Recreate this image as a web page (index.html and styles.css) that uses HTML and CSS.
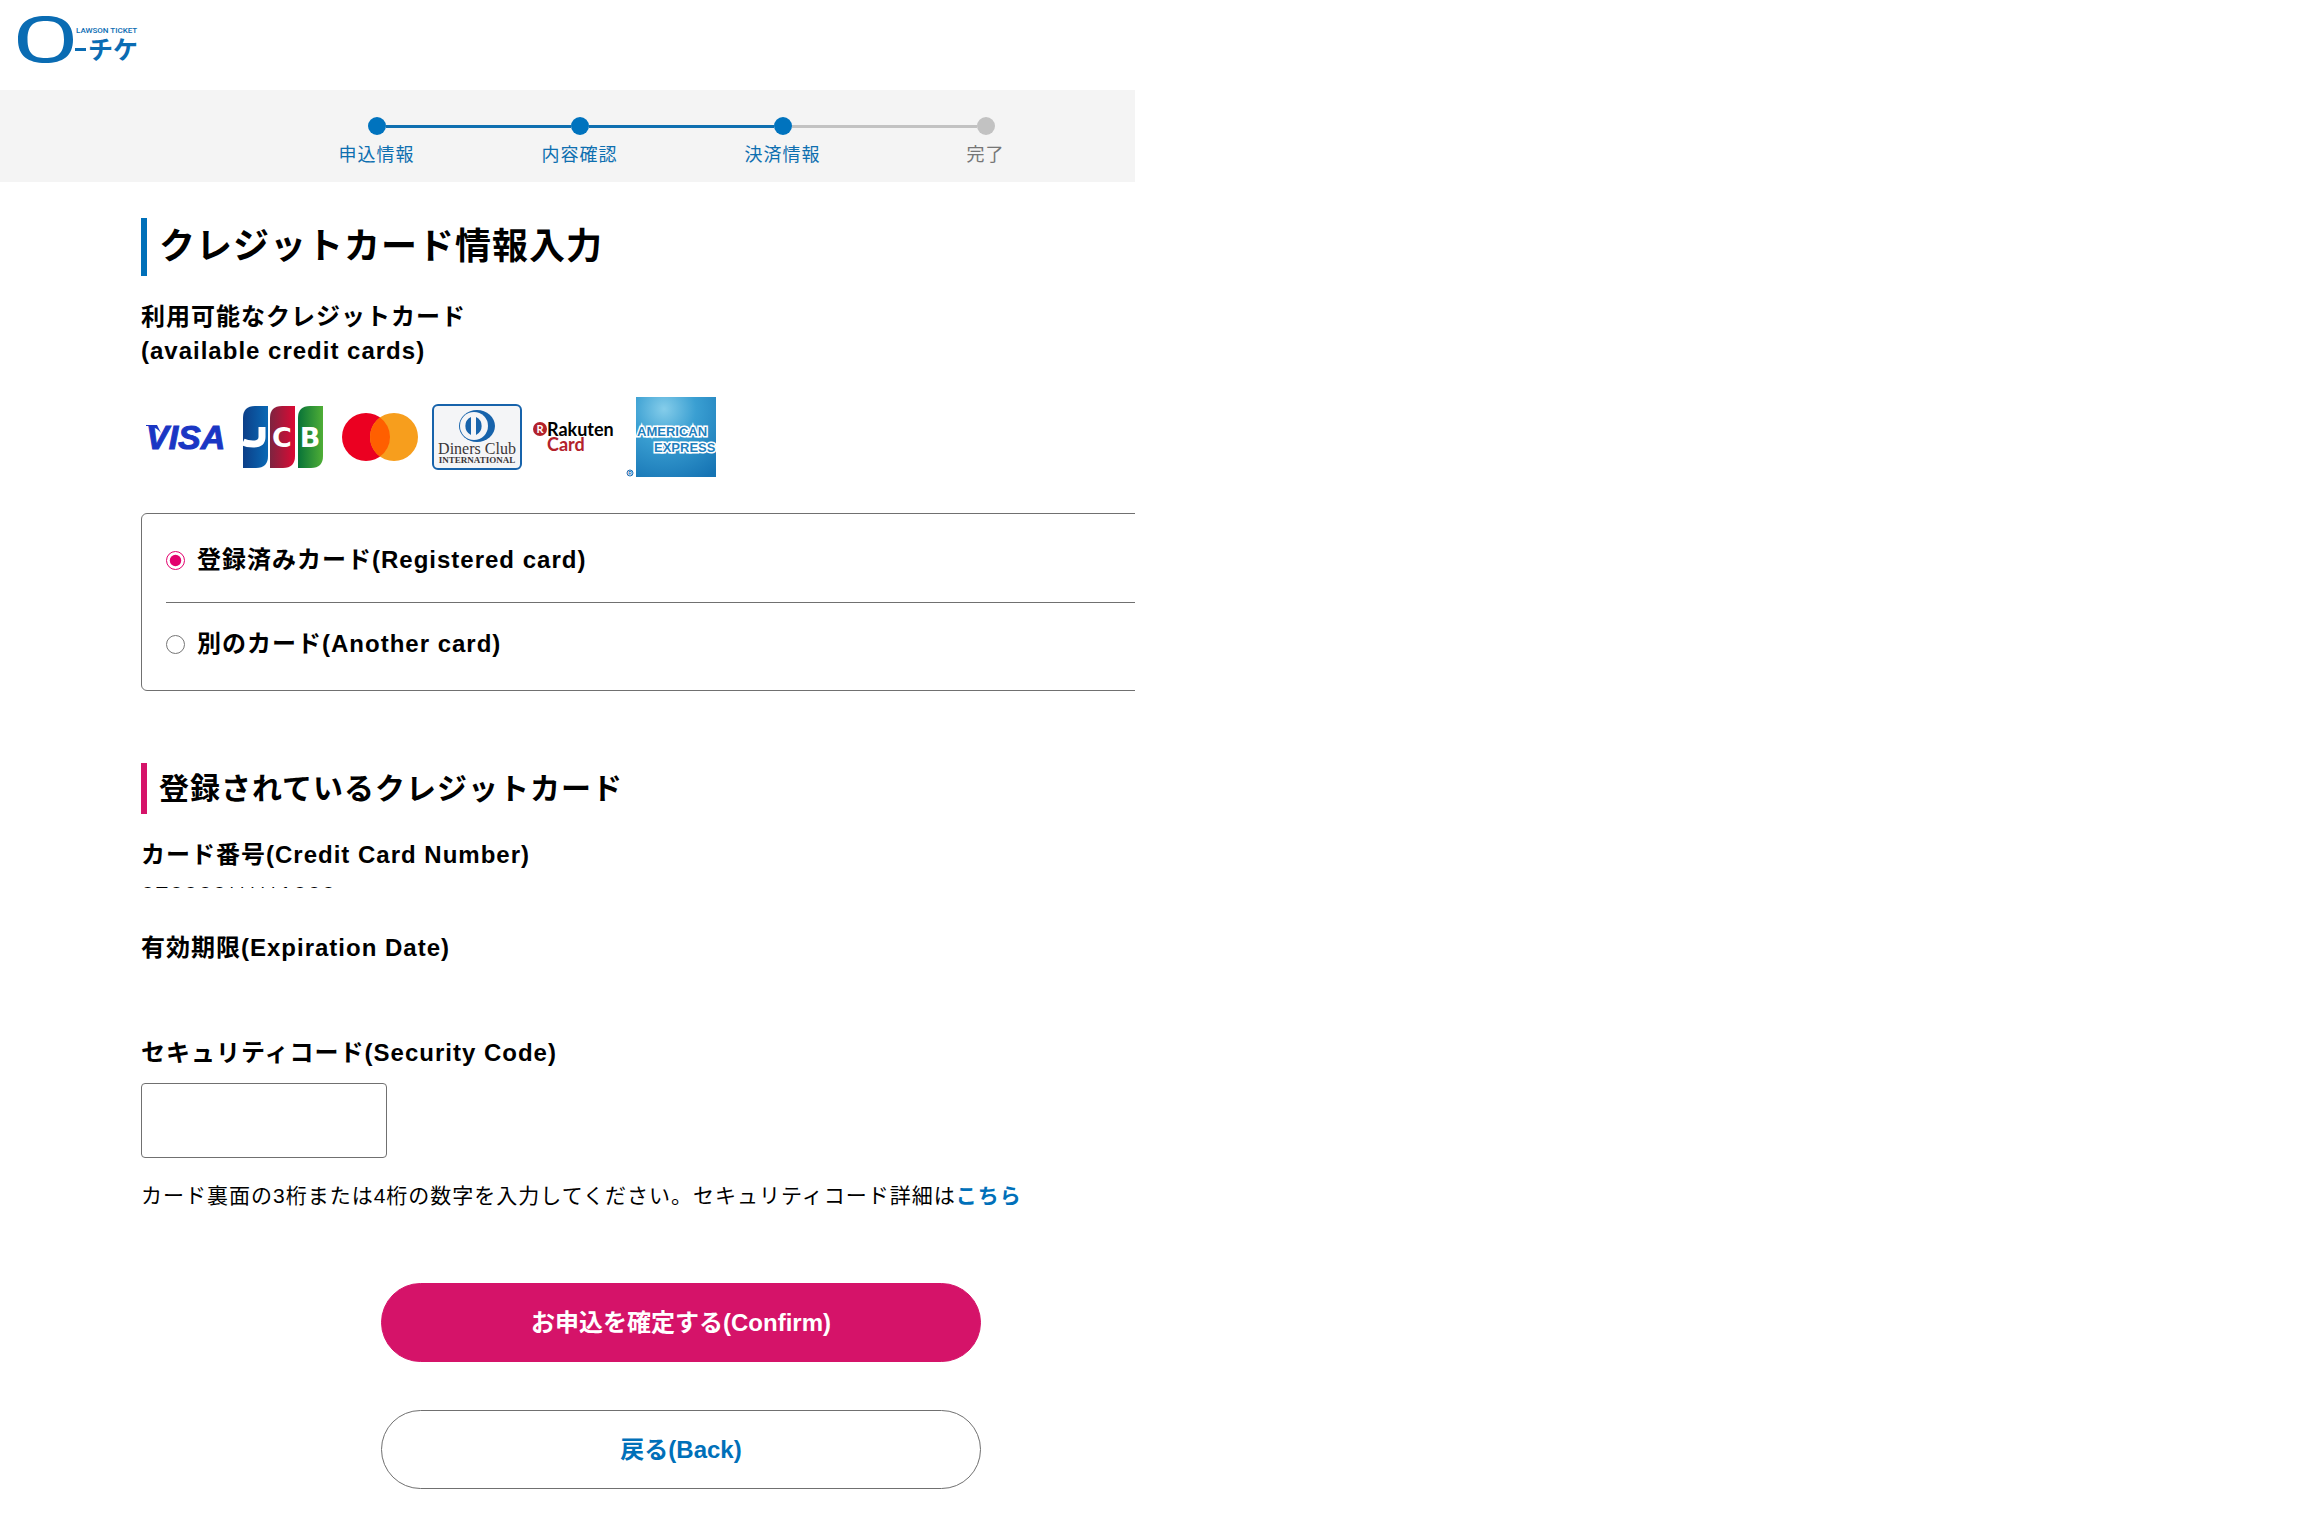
FILE: index.html
```html
<!DOCTYPE html>
<html lang="ja">
<head>
<meta charset="utf-8">
<title>クレジットカード情報入力</title>
<link rel="stylesheet" href="styles.css">
</head>
<body>
<div class="page">

  <header class="header">
    <a href="#" class="logo" aria-label="ローチケ">
      <svg width="122" height="48" viewBox="0 0 122 48">
        <path fill="#0a6cb3" fill-rule="evenodd" d="M27.500 0C45 0 55 7 55 23.500S45 47 27.500 47 0 40 0 23.500 10 0 27.500 0zM27.500 5C16 5 9.500 9 9.500 23.500S16 42 27.500 42 46 38 46 23.500 39 5 27.500 5z"/>
        <text x="58" y="17" class="logo-en">LAWSON TICKET</text>
        <rect x="57" y="32" width="11" height="3" fill="#0a6cb3"/>
        <text x="70" y="43" class="logo-ja">チケ</text>
      </svg>
    </a>
  </header>

  <nav class="steps">
    <ol class="step-list">
      <li class="step done"><span class="marker"><i class="dot"></i></span>申込情報</li>
      <li class="step done"><span class="marker"><i class="dot"></i></span>内容確認</li>
      <li class="step current"><span class="marker"><i class="dot"></i></span>決済情報</li>
      <li class="step"><span class="marker"><i class="dot"></i></span>完了</li>
    </ol>
  </nav>

  <main class="main">
    <h1 class="title">クレジットカード情報入力</h1>

    <h2 class="label">利用可能なクレジットカード<br>(available credit cards)</h2>
    <div class="brands">
      <!-- VISA -->
      <svg class="brand" viewBox="0 0 90 80">
        <path d="M5 28h11l4 8C16 31 11 29 5 29z" fill="#1a36c4"/>
        <text x="5" y="52" class="visa">VISA</text>
      </svg>
      <!-- JCB -->
      <svg class="brand" viewBox="0 0 90 80">
        <defs>
          <linearGradient id="jcb-j"><stop offset="0" stop-color="#0c3f88"/><stop offset="1" stop-color="#0a69b5"/></linearGradient>
          <linearGradient id="jcb-c"><stop offset="0" stop-color="#7d2440"/><stop offset="1" stop-color="#dc0a34"/></linearGradient>
          <linearGradient id="jcb-b"><stop offset="0" stop-color="#087338"/><stop offset="1" stop-color="#4fae36"/></linearGradient>
        </defs>
        <path fill="url(#jcb-j)" d="M17 9h13v50q0 12-12 12H5V21Q5 9 17 9z"/>
        <path fill="url(#jcb-c)" d="M44 9h13v50q0 12-12 12H32V21Q32 9 44 9z"/>
        <path fill="url(#jcb-b)" d="M72 9h13v50q0 12-12 12H60V21Q60 9 72 9z"/>
        <path fill="none" stroke="#fff" stroke-width="7" d="M24 30v10q0 7-9 7-6 0-10-2"/>
        <text x="44" y="50" class="jcb">C</text>
        <text x="72" y="50" class="jcb">B</text>
      </svg>
      <!-- Mastercard -->
      <svg class="brand" viewBox="0 0 90 80">
        <circle cx="31" cy="40" r="24" fill="#eb0021"/>
        <circle cx="59" cy="40" r="24" fill="#f79e1d"/>
        <path d="M45 20.500a24 24 0 0 1 0 39 24 24 0 0 1 0-39z" fill="#ff5f00"/>
      </svg>
      <!-- Diners Club -->
      <svg class="brand" viewBox="0 0 90 80">
        <rect x="1" y="8" width="88" height="64" rx="5" fill="#f4f5f7" stroke="#1763ab" stroke-width="2"/>
        <ellipse cx="45" cy="29" rx="18" ry="16" fill="#1763ab"/>
        <circle cx="42" cy="29" r="14" fill="#f4f5f7"/>
        <path d="M39 20v18a10 10 0 0 1 0-18zM44 20v18a10 10 0 0 0 0-18z" fill="#1763ab"/>
        <text x="45" y="57" class="diners">Diners Club</text>
        <text x="45" y="66" class="diners-sub">INTERNATIONAL</text>
      </svg>
      <!-- Rakuten Card -->
      <svg class="brand" viewBox="0 0 90 80">
        <circle cx="11" cy="32" r="7" fill="#b3222b"/>
        <text x="11" y="36" class="rakuten-r">R</text>
        <text x="18" y="39" class="rakuten">Rakuten</text>
        <text x="18" y="54" class="rakuten rakuten-card">Card</text>
      </svg>
      <!-- American Express -->
      <svg class="brand" viewBox="0 0 90 80">
        <defs>
          <radialGradient id="amex" cx="0.350" cy="0.150" r="1">
            <stop offset="0" stop-color="#85cdea"/>
            <stop offset="0.400" stop-color="#3a9fd2"/>
            <stop offset="1" stop-color="#1674b4"/>
          </radialGradient>
        </defs>
        <rect x="10" width="80" height="80" fill="url(#amex)"/>
        <text x="11" y="39" class="amex">AMERICAN</text>
        <text x="28" y="55" class="amex">EXPRESS</text>
        <circle cx="4" cy="76" r="3" fill="none" stroke="#1f6fb5"/>
        <text x="4" y="78" class="amex-r">R</text>
      </svg>
    </div>

    <div class="card-select">
      <label class="choice"><input type="radio" name="card" checked>登録済みカード(Registered card)</label>
      <label class="choice"><input type="radio" name="card">別のカード(Another card)</label>
    </div>

    <h2 class="subtitle">登録されているクレジットカード</h2>

    <h3 class="label">カード番号(Credit Card Number)</h3>
    <p class="card-number">070000*****1000</p>

    <h3 class="label expiry">有効期限(Expiration Date)</h3>

    <label class="label code-label" for="code">セキュリティコード(Security Code)</label>
    <input type="text" id="code" class="code">
    <p class="note">カード裏面の3桁または4桁の数字を入力してください。セキュリティコード詳細は<a href="#">こちら</a></p>

    <div class="buttons">
      <button type="submit" class="btn btn-confirm">お申込を確定する(Confirm)</button>
      <button type="button" class="btn btn-back">戻る(Back)</button>
    </div>
  </main>

</div>
</body>
</html>
```
FILE: styles.css
```css
* {
  box-sizing: border-box;
}

body {
  margin: 0;
  background: #fff;
  color: #000;
  font-family: "Liberation Sans", "Noto Sans CJK JP", sans-serif;
  font-size: 24px;
  line-height: 34px;
  letter-spacing: 1px;
}

h1, h2, h3, p, ol {
  margin: 0;
  padding: 0;
}

/* the content runs wider than the page and is cut at its right edge */
.page {
  max-width: 1135px;
  overflow: hidden;
}

.header {
  height: 90px;
  padding: 16px 18px;
}

.logo {
  display: block;
  width: 122px;
}

.logo svg {
  display: block;
  letter-spacing: 0;
  fill: #0a6cb3;
}

.logo-en {
  font: 500 8px Roboto, sans-serif;
}

.logo-ja {
  font: bold 25px "Noto Sans CJK JP", sans-serif;
}

/* progress */
.steps {
  background: #f4f4f4;
  padding: 27px 0 14px 275px;
}

.step-list {
  display: flex;
  list-style: none;
}

.step {
  flex: 0 0 203px;
  color: #767676;
  font-size: 18px;
  line-height: 26px;
  text-align: center;
}

.marker {
  display: flex;
  align-items: center;
  margin-bottom: 7px;
}

.marker::before,
.marker::after {
  content: "";
  flex: 1;
  height: 3px;
  background: #c2c2c2;
}

.dot {
  width: 18px;
  height: 18px;
  border-radius: 50%;
  background: #c2c2c2;
}

.done,
.current {
  color: #0e6fb0;
}

.done .dot,
.current .dot {
  background: #0073be;
}

.done .marker::before,
.done .marker::after,
.current .marker::before {
  background: #0e6fb0;
}

.step:first-child .marker::before,
.step:last-child .marker::after {
  visibility: hidden;
}

/* content */
.main {
  width: 1080px;
  margin-left: 141px;
  padding: 36px 0 25px;
}

.title,
.subtitle {
  padding-left: 12px;
  border-left: 6px solid #0070b9;
  font-size: 36px;
  line-height: 58px;
}

.subtitle {
  margin-top: 72px;
  border-color: #d51369;
  font-size: 30px;
  line-height: 51px;
}

.label {
  display: block;
  margin-top: 24px;
  font-size: 24px;
  font-weight: bold;
}

.brands {
  display: flex;
  gap: 7px;
  margin: 29px 0 36px;
  letter-spacing: 0;
}

.brand {
  width: 90px;
  height: 80px;
}

.visa {
  fill: #1a36c4;
  stroke: #1a36c4;
  font: italic bold 34px "Liberation Sans", sans-serif;
}

.jcb {
  fill: #fff;
  font: bold 27px "DejaVu Sans", sans-serif;
  text-anchor: middle;
}

.diners,
.diners-sub {
  fill: #3a3537;
  font: 16px "Liberation Serif", serif;
  text-anchor: middle;
}

.diners-sub {
  font-size: 9px;
  font-weight: bold;
}

.rakuten {
  fill: #000;
  font: bold 18px Lato, sans-serif;
}

.rakuten-card {
  fill: #b3222b;
}

.rakuten-r {
  fill: #fff;
  font: bold 11px Lato, sans-serif;
  text-anchor: middle;
}

.amex {
  fill: #1f7fbd;
  stroke: #fff;
  stroke-width: 3px;
  paint-order: stroke;
  font: bold 13px "Liberation Sans", sans-serif;
}

.amex-r {
  fill: #1f6fb5;
  font: bold 5px "Liberation Sans", sans-serif;
  text-anchor: middle;
}

.card-select {
  padding: 29px 24px;
  border: 1px solid #707070;
  border-radius: 6px;
}

.choice {
  display: flex;
  align-items: center;
  gap: 12px;
  font-weight: bold;
}

.choice:first-child {
  padding-bottom: 25px;
  border-bottom: 1px solid #707070;
}

.choice:last-child {
  padding-top: 24px;
}

.choice input {
  width: 19px;
  height: 19px;
  margin: 0;
  accent-color: #e3006e;
}

/* masked number, only its top edge stays visible */
.card-number {
  height: 1px;
  margin-top: 15px;
  line-height: 18px;
  overflow: hidden;
}

.expiry {
  margin-top: 43px;
}

.code-label {
  margin-top: 71px;
}

.code {
  display: block;
  width: 246px;
  height: 75px;
  margin-top: 13px;
  padding: 0 16px;
  border: 1px solid #707070;
  border-radius: 4px;
  background: #fff;
  font: inherit;
}

.note {
  margin-top: 21px;
  font-size: 21px;
}

.note a {
  color: #0070b9;
  font-weight: bold;
  text-decoration: none;
}

.buttons {
  display: flex;
  flex-direction: column;
  align-items: center;
  gap: 48px;
  margin-top: 70px;
}

.btn {
  width: 600px;
  height: 79px;
  padding: 0 0 4px;
  border: 1px solid #707070;
  border-radius: 40px;
  background: #fff;
  color: #0070b9;
  font: bold 24px "Liberation Sans", "Noto Sans CJK JP", sans-serif;
  cursor: pointer;
}

.btn-confirm {
  border-color: #d51369;
  background: #d51369;
  color: #fff;
}
```
